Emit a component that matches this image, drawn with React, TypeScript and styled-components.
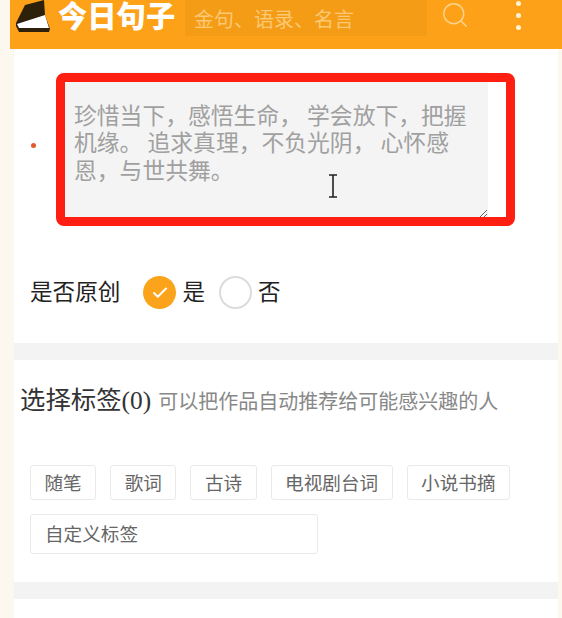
import React from 'react';
import styled, { createGlobalStyle } from 'styled-components';
import { Search, Check } from 'lucide-react';

const GlobalStyle = createGlobalStyle`
  html, body {
    margin: 0;
    padding: 0;
    background: #fdf8ef;
  }
  * {
    box-sizing: border-box;
  }
`;

const cjk = `"Noto Sans CJK SC", "Noto Sans", sans-serif`;

const Page = styled.div`
  width: 562px;
  height: 618px;
  overflow: hidden;
  font-family: ${cjk};
  background: #fdf8ef;
`;

const Header = styled.header`
  display: flex;
  align-items: flex-start;
  height: 49px;
  margin-left: 10px;
  padding-left: 5px;
  background: #fda119;
`;

const Logo = styled.svg`
  flex: none;
  width: 38px;
  height: 33px;
`;

const Brand = styled.div`
  width: 120px;
  margin-left: 5px;
  font-size: 29.3px;
  line-height: 28px;
  font-weight: 900;
  color: #fff;
  white-space: nowrap;
`;

const SearchBox = styled.input`
  width: 242px;
  height: 36px;
  margin-left: 7px;
  padding: 0 9px;
  border: none;
  outline: none;
  background: #f59c17;
  font-family: ${cjk};
  font-size: 20px;

  &::placeholder {
    color: #fbc873;
    opacity: 1;
  }
`;

const SearchButton = styled.div`
  display: flex;
  margin-left: 13px;
  color: #fcd48f;
`;

const MoreDots = styled.div`
  display: flex;
  flex-direction: column;
  gap: 7px;
  margin: 1px 0 0 46px;
`;

const Dot = styled.span`
  width: 5px;
  height: 5px;
  border-radius: 50%;
  background: #fff3d6;
`;

const Main = styled.main`
  display: flex;
  flex-direction: column;
  gap: 17px;
  margin: 0 4px 0 14px;
  background: #f3f3f3;
`;

const Card = styled.section`
  background: #fff;
`;

const EditorCard = styled(Card)`
  padding: 23px 16px 34px;
`;

const EditorRow = styled.div`
  display: flex;
  align-items: center;
  gap: 24px;
  padding-left: 1px;
`;

const Required = styled.span`
  flex: none;
  width: 5px;
  height: 5px;
  border-radius: 50%;
  background: #e2592c;
`;

const EditorBox = styled.div`
  position: relative;
  display: flex;
`;

const Editor = styled.textarea`
  display: block;
  width: 428px;
  height: 146px;
  padding: 29px 18px 0 14px;
  border: none;
  outline: none;
  background: #f4f4f4;
  color: #a0a0a0;
  font-family: ${cjk};
  font-size: 22.8px;
  line-height: 27.3px;
  resize: vertical;
  overflow: hidden;

  &::placeholder {
    color: #a0a0a0;
    opacity: 1;
  }
`;

const Highlight = styled.div`
  position: absolute;
  top: 1px;
  left: -4px;
  width: 459px;
  height: 153px;
  border: 9px solid #ff1e12;
  border-radius: 8px;
  pointer-events: none;
`;

const TextCursor = styled.svg`
  position: absolute;
  top: 102px;
  left: 267px;
  width: 12px;
  height: 24px;
  pointer-events: none;
`;

const OriginalRow = styled.div`
  display: flex;
  align-items: center;
  margin-top: 58px;
  font-size: 22.6px;
  line-height: 33px;
  color: #222;
`;

const OriginalLabel = styled.span`
  margin: -4px 23px 0 0;
`;

const Radio = styled.span<{ $checked?: boolean }>`
  display: flex;
  align-items: center;
  justify-content: center;
  width: 33px;
  height: 33px;
  margin-right: 7px;
  border-radius: 50%;
  border: ${({ $checked }) => ($checked ? 'none' : '2px solid #dcdcdc')};
  background: ${({ $checked }) => ($checked ? '#fca31c' : '#fff')};
  color: #fff;
`;

const RadioText = styled.span`
  margin: -4px 14px 0 -1px;
`;

const TagCard = styled(Card)`
  height: 222px;
  padding: 22px 16px 0 7px;
`;

const TagTitle = styled.div`
  display: flex;
  align-items: baseline;
  gap: 7px;
  height: 38px;
  margin-left: -1px;
`;

const TitleMain = styled.h3`
  margin: 0;
  font-family: "Liberation Serif", "Noto Sans CJK SC", serif;
  font-size: 25.4px;
  line-height: 36px;
  font-weight: 400;
  color: #333;
`;

const TitleHint = styled.span`
  font-size: 20px;
  color: #888;
`;

const TagList = styled.div`
  display: flex;
  flex-wrap: wrap;
  gap: 14px;
  margin: 45px 0 0 9px;
`;

const Tag = styled.span`
  height: 35px;
  padding: 0 13.5px;
  border: 1px solid #eaeaea;
  border-radius: 3px;
  font-size: 18.6px;
  line-height: 32px;
  color: #666;
`;

const CustomTag = styled.input`
  width: 288px;
  height: 40px;
  padding: 0 14px 4px;
  border: 1px solid #eaeaea;
  border-radius: 3px;
  outline: none;
  background: #fff;
  font-family: ${cjk};
  font-size: 18.6px;

  &::placeholder {
    color: #666;
    opacity: 1;
  }
`;

const BottomCard = styled(Card)`
  height: 60px;
`;

const tags = ['随笔', '歌词', '古诗', '电视剧台词', '小说书摘'];

const App: React.FC = () => {
  return (
    <Page>
      <GlobalStyle />
      <Header>
        <Logo viewBox="0 0 38 33">
          <path d="M1 23 L10 5 L29 0 L30 15 L35 29 L34 32 L4 32 L1 26 Z" fill="#2e210c" />
          <path d="M2 24 L30 15 L34 28 L4 28 Z" fill="#fff" />
        </Logo>
        <Brand>今日句子</Brand>
        <SearchBox placeholder="金句、语录、名言" />
        <SearchButton>
          <Search size={30} strokeWidth={1.1} />
        </SearchButton>
        <MoreDots>
          <Dot />
          <Dot />
          <Dot />
        </MoreDots>
      </Header>
      <Main>
        <EditorCard>
          <EditorRow>
            <Required />
            <EditorBox>
              <Editor placeholder="珍惜当下，感悟生命， 学会放下，把握机缘。 追求真理，不负光阴， 心怀感恩，与世共舞。" />
              <Highlight />
              <TextCursor viewBox="0 0 12 24">
                <path d="M2 1 H10 M6 1 V23 M2 23 H10" fill="none" stroke="#222" strokeWidth="1.6" />
              </TextCursor>
            </EditorBox>
          </EditorRow>
          <OriginalRow>
            <OriginalLabel>是否原创</OriginalLabel>
            <Radio $checked>
              <Check size={18} strokeWidth={2.6} />
            </Radio>
            <RadioText>是</RadioText>
            <Radio />
            <RadioText>否</RadioText>
          </OriginalRow>
        </EditorCard>
        <TagCard>
          <TagTitle>
            <TitleMain>选择标签(0)</TitleMain>
            <TitleHint>可以把作品自动推荐给可能感兴趣的人</TitleHint>
          </TagTitle>
          <TagList>
            {tags.map((tag) => (
              <Tag key={tag}>{tag}</Tag>
            ))}
            <CustomTag placeholder="自定义标签" />
          </TagList>
        </TagCard>
        <BottomCard />
      </Main>
    </Page>
  );
};

export default App;
